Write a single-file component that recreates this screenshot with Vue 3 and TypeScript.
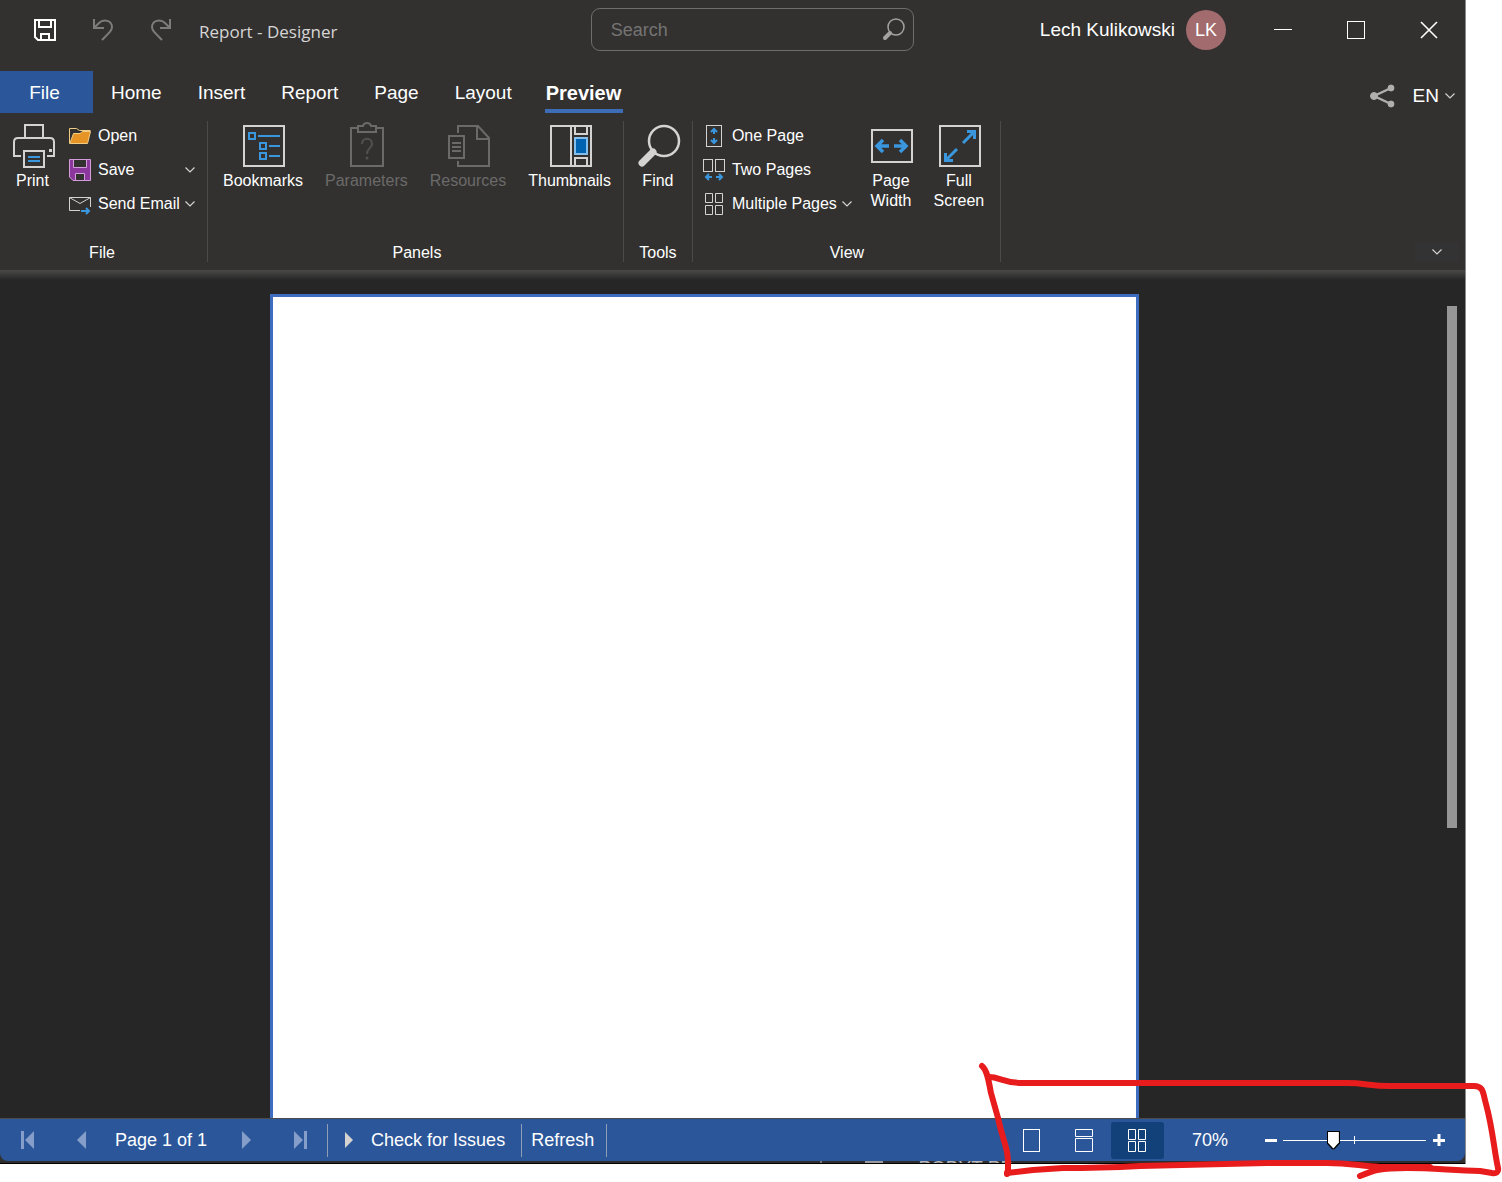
<script setup lang="ts">
import { ref } from 'vue'

const tabs: string[] = ['Home', 'Insert', 'Report', 'Page', 'Layout', 'Preview']
const activeTab = ref('Preview')
const query = ref('')
const sliderPosition = ref(34)
const zoomLabel = ref('70%')
const viewMode = ref('multiple')
</script>

<template>
  <div class="screen">
    <div class="window">
      <header class="titlebar">
        <div class="quick">
          <button class="quick-btn" aria-label="Save">
            <svg width="22" height="22" fill="none" stroke="#fff" stroke-width="2">
              <path d="M1 1H21V21H4L1 18Z" />
              <path d="M5 1V8H17V1M7 21V15H15V21" />
            </svg>
          </button>
          <button class="quick-btn" aria-label="Undo">
            <svg width="22" height="22" fill="none" stroke="#7d7c7b" stroke-width="2">
              <path d="M2 0V9H12M2 9L7 4C12 -1 20 2 20 8C20 11 18 13 10 21" />
            </svg>
          </button>
          <button class="quick-btn" aria-label="Redo">
            <svg width="22" height="22" fill="none" stroke="#7d7c7b" stroke-width="2">
              <path d="M20 0V9H10M20 9L15 4C10 -1 2 2 2 8C2 11 4 13 12 21" />
            </svg>
          </button>
          <h1 class="title">Report - Designer</h1>
        </div>
        <label class="search">
          <input v-model="query" type="text" placeholder="Search" aria-label="Search" />
          <svg width="23" height="23" fill="none" stroke="#a3a2a1">
            <circle cx="14" cy="9" r="8" stroke-width="1.5" />
            <path d="M8 15L3 20" stroke-width="4" stroke-linecap="round" />
          </svg>
        </label>
        <div class="account">
          <span>Lech Kulikowski</span>
          <span class="avatar">LK</span>
        </div>
        <div class="controls">
          <button aria-label="Minimize">
            <svg width="18" height="18" stroke="#fff"><path d="M0 8.5H18" /></svg>
          </button>
          <button aria-label="Maximize">
            <svg width="18" height="18" fill="none" stroke="#fff"><rect x=".5" y=".5" width="17" height="17" /></svg>
          </button>
          <button aria-label="Close">
            <svg width="18" height="18" stroke="#fff" stroke-width="1.6"><path d="M1 1L17 17M17 1L1 17" /></svg>
          </button>
        </div>
      </header>

      <nav class="tabs">
        <button class="file-tab">File</button>
        <button
          v-for="tab in tabs"
          :key="tab"
          class="tab"
          :class="{ active: tab === activeTab }"
          @click="activeTab = tab"
        >{{ tab }}</button>
        <div class="tabs-right">
          <button class="share" aria-label="Share">
            <svg width="25" height="24" fill="#b0afae" stroke="#b0afae">
              <path d="M21 4L4 12L21 20" fill="none" stroke-width="2.4" />
              <circle cx="4" cy="12" r="3.5" /><circle cx="21" cy="4" r="3" /><circle cx="21" cy="20" r="3" />
            </svg>
          </button>
          <button class="lang">
            EN
            <svg class="chevron" width="10" height="6"><path d="M.5 .5L5 5L9.5 .5" /></svg>
          </button>
        </div>
      </nav>

      <section class="ribbon">
        <div class="group group-file">
          <div class="items">
            <button class="big print">
              <svg width="42" height="42" fill="none" stroke="#d4d3d2" stroke-width="2">
                <path d="M12 12V0H30V12" />
                <path d="M8 31H1V17Q1 13 5 13H37Q41 13 41 17V31H34" />
                <rect x="11" y="26" width="20" height="16" />
                <rect x="36" y="24" width="3" height="3" fill="#d4d3d2" stroke="none" />
                <path d="M15 32H27M15 36H27" stroke="#3a96dd" />
              </svg>
              Print
            </button>
            <div class="stack">
              <button class="small">
                <svg width="22" height="22" stroke="#f0cc84">
                  <path d="M.5 18.5V3.5H7.5L10.5 5.5H21.5" fill="none" />
                  <path d="M4.5 8.5H11L13.500 6.500H21.5L18.500 18.500H.8Z" fill="#e59425" />
                </svg>
                Open
              </button>
              <button class="small">
                <svg width="22" height="22" stroke="#d59ddd">
                  <path d="M.5 .5H21.5V21.5H4L.5 18Z" fill="#8b389c" />
                  <path d="M4.500 .5V8.500H17.500V.5ZM6.500 21.500V14.500H15.500V21.500Z" fill="#323130" />
                </svg>
                Save
                <svg class="chevron" width="10" height="6"><path d="M.5 .5L5 5L9.5 .5" /></svg>
              </button>
              <button class="small">
                <svg width="22" height="22" fill="none" stroke="#d4d3d2">
                  <path d="M11 17.5H.5V4.5H21.5V14" />
                  <path d="M.5 4.5L11 10.5L21.5 4.5" />
                  <path d="M12 18H20M17 15L20 18L17 21" stroke="#3a96dd" stroke-width="2" />
                </svg>
                Send Email
                <svg class="chevron" width="10" height="6"><path d="M.5 .5L5 5L9.5 .5" /></svg>
              </button>
            </div>
          </div>
          <div class="caption">File</div>
        </div>

        <div class="group group-panels">
          <div class="items">
            <button class="big">
              <svg width="42" height="42" fill="none" stroke="#d4d3d2" stroke-width="2">
                <rect x="1" y="1" width="40" height="40" />
                <g stroke="#3a96dd">
                  <rect x="6" y="8" width="6" height="6" />
                  <rect x="17" y="18" width="6" height="6" />
                  <rect x="17" y="28" width="6" height="6" />
                  <path d="M15 11H37M26 21H37M26 31H37" />
                </g>
              </svg>
              Bookmarks
            </button>
            <button class="big" disabled>
              <svg width="42" height="42" fill="none" stroke="#6b6a69" stroke-width="2">
                <rect x="5" y="3" width="32" height="38" />
                <path d="M12 1H17C18 -3 24 -3 25 1H30V7H12Z" fill="#323130" />
                <path d="M16 19C16 12 26 12 26 19C26 23 21 23 21 29" stroke="#525150" />
                <circle cx="21" cy="33" r="1.500" fill="#525150" stroke="none" />
              </svg>
              Parameters
            </button>
            <button class="big" disabled>
              <svg width="42" height="42" fill="none" stroke="#6b6a69" stroke-width="2">
                <path d="M10 8V1H30L41 13V41H10V36" />
                <path d="M29 1V14H41" />
                <rect x="1" y="11" width="15" height="22" />
                <path d="M4 18H13M4 22H13M4 26H13" />
              </svg>
              Resources
            </button>
            <button class="big">
              <svg width="42" height="42" fill="none" stroke="#d4d3d2" stroke-width="2">
                <rect x="1" y="1" width="40" height="40" />
                <path d="M21 1V41M25 1V9H37V1M25 41V33H37V41" />
                <rect x="25" y="13" width="12" height="16" fill="#0063b1" stroke="#83beec" />
              </svg>
              Thumbnails
            </button>
          </div>
          <div class="caption">Panels</div>
        </div>

        <div class="group group-tools">
          <div class="items">
            <button class="big find">
              <svg width="42" height="42" fill="none" stroke="#d4d3d2">
                <circle cx="26" cy="16" r="15" stroke-width="2.500" />
                <path d="M15 27L4 38" stroke-width="7" stroke-linecap="round" />
              </svg>
              Find
            </button>
          </div>
          <div class="caption">Tools</div>
        </div>

        <div class="group group-view">
          <div class="items">
            <div class="stack">
              <button class="small">
                <svg width="22" height="22" fill="none" stroke="#d4d3d2">
                  <rect x="3.500" y=".5" width="15" height="21" />
                  <path d="M11 4V9M8 7L11 4L14 7M11 18V13M8 15L11 18L14 15" stroke="#3a96dd" stroke-width="2" />
                </svg>
                One Page
              </button>
              <button class="small">
                <svg width="22" height="22" fill="none" stroke="#d4d3d2">
                  <rect x=".5" y=".5" width="9" height="12" />
                  <rect x="12.500" y=".5" width="9" height="12" />
                  <path d="M3 18H9M6 15L3 18L6 21M13 18H19M16 15L19 18L16 21" stroke="#3a96dd" stroke-width="2" />
                </svg>
                Two Pages
              </button>
              <button class="small">
                <svg width="22" height="22" fill="none" stroke="#d4d3d2">
                  <path d="M2.500 .5H9.500V9.500H2.500ZM12.500 .5H19.500V9.500H12.500ZM2.500 12.500H9.500V21.500H2.500ZM12.500 12.500H19.500V21.500H12.500Z" />
                </svg>
                Multiple Pages
                <svg class="chevron" width="10" height="6"><path d="M.5 .5L5 5L9.5 .5" /></svg>
              </button>
            </div>
            <button class="big page-width">
              <svg width="42" height="42" fill="none" stroke="#d4d3d2" stroke-width="2">
                <rect x="1" y="5" width="40" height="32" />
                <path d="M6 21H18M12 15L6 21L12 27M23 21H35M29 15L35 21L29 27" stroke="#3a96dd" stroke-width="3.500" />
              </svg>
              Page<br />Width
            </button>
            <button class="big full">
              <svg width="42" height="42" fill="none" stroke="#d4d3d2" stroke-width="2">
                <rect x="1" y="1" width="40" height="40" />
                <path d="M28 6.500H35.500V14M35 7L24 18M6.500 28V35.500H14M7 35L18 24" stroke="#3a96dd" stroke-width="3" />
              </svg>
              Full<br />Screen
            </button>
          </div>
          <div class="caption">View</div>
        </div>

        <button class="collapse" aria-label="Collapse ribbon">
          <svg class="chevron" width="10" height="6"><path d="M.5 .5L5 5L9.5 .5" /></svg>
        </button>
      </section>

      <main class="workspace">
        <div class="stage"><div class="paper"></div></div>
        <div class="scrollbar"><div class="scroll-thumb"></div></div>
      </main>

      <footer class="status">
        <button class="nav-btn" aria-label="First page">
          <svg width="13" height="18" fill="#859dc9"><path d="M0 0H3V18H0ZM13 0V18L4 9Z" /></svg>
        </button>
        <button class="nav-btn" aria-label="Previous page">
          <svg width="9" height="18" fill="#859dc9"><path d="M9 0V18L0 9Z" /></svg>
        </button>
        <span class="page-no">Page 1 of 1</span>
        <button class="nav-btn" aria-label="Next page">
          <svg width="9" height="18" fill="#859dc9"><path d="M0 0V18L9 9Z" /></svg>
        </button>
        <button class="nav-btn" aria-label="Last page">
          <svg width="13" height="18" fill="#859dc9"><path d="M10 0H13V18H10ZM0 0V18L9 9Z" /></svg>
        </button>
        <button class="check">
          <svg width="9" height="16" fill="#d4d3d2"><path d="M0 0V16L8 8Z" /></svg>
          Check for Issues
        </button>
        <button class="refresh">Refresh</button>

        <div class="views">
          <button :class="{ on: viewMode === 'single' }" aria-label="Single page" @click="viewMode = 'single'">
            <svg width="17" height="23"><rect x=".5" y=".5" width="16" height="22" /></svg>
          </button>
          <button :class="{ on: viewMode === 'continuous' }" aria-label="Continuous" @click="viewMode = 'continuous'">
            <svg width="18" height="23"><path d="M.5 .5H17.500V7.500H.5ZM.5 9.500H17.500V22.500H.5Z" /></svg>
          </button>
          <button :class="{ on: viewMode === 'multiple' }" aria-label="Multiple pages" @click="viewMode = 'multiple'">
            <svg width="18" height="23">
              <path d="M.5 .5H7.500V10.500H.5ZM10.500 .5H17.500V10.500H10.500ZM.5 12.500H7.500V22.500H.5ZM10.500 12.500H17.500V22.500H10.500Z" />
            </svg>
          </button>
        </div>
        <span class="zoom">{{ zoomLabel }}</span>
        <button class="step" aria-label="Zoom out">
          <svg width="12" height="12" stroke="#fff" stroke-width="3"><path d="M0 6.500H12" /></svg>
        </button>
        <div class="track">
          <input v-model.number="sliderPosition" type="range" min="0" max="100" aria-label="Zoom" />
        </div>
        <button class="step" aria-label="Zoom in">
          <svg width="12" height="12" stroke="#fff" stroke-width="3"><path d="M0 6.500H12M6 0V12" /></svg>
        </button>
      </footer>
      <div class="behind">
        <i class="behind-line"></i><i class="behind-block"></i><span>POBYT PD</span>
      </div>
    </div>

    <svg class="ink" width="530" height="130" viewBox="972 1052 530 130" aria-hidden="true">
      <path d="M982 1066C988 1071 989 1084 991 1093L998 1118C1004 1146 1009 1148 1008 1170L1007 1174" />
      <path d="M989 1077C1000 1077 1003 1083 1023 1083H1347C1365 1083 1370 1086 1390 1086H1474C1484 1086 1483 1094 1486 1104C1493 1130 1494 1150 1498 1168Q1499 1174 1492 1173L1480 1171C1450 1170 1430 1168 1407 1168C1380 1168 1374 1170 1360 1176" />
      <path d="M1007 1173L1033 1170L1063 1168C1100 1168 1120 1167 1140 1166L1267 1163H1327C1350 1163 1360 1166 1380 1167H1430" />
    </svg>
  </div>
</template>

<style>
body {
  background: #fff;
}
</style>

<style scoped>
* {
  box-sizing: border-box;
}

.screen {
  position: relative;
  display: flex;
  flex-direction: column;
  min-height: 100vh;
  padding: 0 36px 18px 0;
  background: #fff;
  color: #fff;
  font-family: 'Liberation Sans', Arial, sans-serif;
  font-size: 16px;
  line-height: 20px;
}

button {
  display: flex;
  align-items: center;
  justify-content: center;
  padding: 0;
  border: 0;
  background: none;
  color: inherit;
  font: inherit;
}

svg {
  display: block;
  flex: none;
  overflow: visible;
}

.chevron {
  fill: none;
  stroke: #d4d3d2;
  stroke-width: 1.2;
}

.window {
  display: flex;
  flex: 1;
  flex-direction: column;
  border-right: 1px solid #8a8a8a;
  background: #323130;
}

.titlebar {
  display: flex;
  align-items: center;
  height: 59px;
  margin-bottom: 12px;
  font-size: 19px;
}

.quick {
  display: flex;
  flex: 1;
  align-items: center;
  padding-left: 16px;
}

.quick-btn {
  width: 58px;
  height: 40px;
}

.title {
  margin: 4px 0 0 9px;
  color: #d6d5d4;
  font-family: 'Open Sans', 'Noto Sans', sans-serif;
  font-size: 17px;
  font-weight: 400;
  line-height: 24px;
}

.search {
  display: flex;
  align-items: center;
  width: 323px;
  height: 43px;
  padding: 0 8px 0 19px;
  border: 1px solid #6e6d6c;
  border-radius: 9px;
}

.search input {
  flex: 1;
  min-width: 0;
  padding: 0;
  border: 0;
  outline: 0;
  background: none;
  color: #fff;
  font: inherit;
  font-size: 18px;
}

.search input::placeholder {
  color: #757473;
  opacity: 1;
}

.account {
  display: flex;
  align-items: center;
  gap: 11px;
  margin: 0 20px 0 126px;
  white-space: nowrap;
}

.avatar {
  width: 40px;
  height: 40px;
  border-radius: 50%;
  background: #a26c6f;
  font-size: 18px;
  line-height: 40px;
  text-align: center;
}

.controls {
  display: flex;
}

.controls button {
  width: 73px;
  height: 40px;
}

.tabs {
  display: flex;
  height: 42px;
  font-size: 19px;
}

.file-tab {
  width: 93px;
  padding: 2px 4px 0 0;
  background: #2b579a;
}

.tab {
  position: relative;
  padding: 2px 18px 0;
}

.tab.active {
  padding: 2px 16px 0;
  font-size: 20px;
  font-weight: 700;
}

.tab.active::after {
  position: absolute;
  right: 14px;
  bottom: 0;
  left: 15px;
  height: 4px;
  background: #3e6db8;
  content: '';
}

.tabs-right {
  display: flex;
  align-items: center;
  gap: 18px;
  margin-left: auto;
  padding: 8px 10px 0 0;
}

.lang {
  gap: 6px;
}

.ribbon {
  display: flex;
  padding: 8px 6px 8px 0;
}

.group {
  display: flex;
  flex-direction: column;
  height: 141px;
  border-right: 1px solid #4b4a49;
}

.group-file {
  padding-right: 3px;
}

.group-panels {
  padding: 0 1px 0 4px;
}

.group-view {
  padding: 0 4px 0 5px;
}

.items {
  display: flex;
  flex: 1;
}

.caption {
  height: 20px;
  line-height: 22px;
  text-align: center;
}

.big {
  flex-direction: column;
  justify-content: flex-start;
  padding: 4px 11px 0;
}

.big svg {
  margin: 0 0 4px 2px;
}

.big:disabled {
  color: #6b6a69;
}

.print {
  width: 64px;
  padding: 4px 10px 0 11px;
}

.find {
  width: 68px;
}

.page-width {
  width: 62px;
}

.full {
  width: 74px;
}

.stack {
  display: flex;
  flex-direction: column;
  width: 140px;
  height: 120px;
}

.group-view .stack {
  width: 162px;
}

.small {
  justify-content: flex-start;
  gap: 5px;
  height: 34px;
  padding: 0 9px 4px 5px;
  line-height: 22px;
  white-space: nowrap;
}

.small svg:first-child {
  margin-right: 2px;
}

.small .chevron {
  margin-left: auto;
}

.collapse {
  align-self: flex-end;
  width: 44px;
  height: 20px;
  margin-left: auto;
  background: #333;
}

.workspace {
  display: flex;
  flex: 1;
  background: linear-gradient(#4a4948, #262626 10px);
}

.stage {
  display: flex;
  flex: 1;
  justify-content: center;
  padding-top: 24px;
}

.paper {
  width: 869px;
  border: 3px solid #3e6dbf;
  border-bottom: 0;
  background: #fff;
}

.scrollbar {
  display: flex;
  flex-direction: column;
  width: 56px;
  padding: 36px 8px 0 0;
}

.scroll-thumb {
  flex: 9;
  align-self: flex-end;
  width: 10px;
  background: #969696;
}

.scrollbar::after {
  flex: 5;
  content: '';
}

.status {
  display: flex;
  align-items: center;
  height: 43px;
  padding-right: 14px;
  border-top: 1px solid #4a4a4a;
  border-radius: 0 0 8px 8px;
  background: #2b579a;
  font-size: 18px;
  white-space: nowrap;
}

.nav-btn {
  width: 54px;
  height: 37px;
}

.page-no {
  padding: 0 12px 0 7px;
}

.check,
.refresh {
  height: 33px;
  border-left: 1px solid #8f9db5;
}

.check {
  gap: 17px;
  padding: 0 16px 0 17px;
}

.refresh {
  padding: 0 12px 0 9px;
  border-right: 1px solid #8f9db5;
}

.views {
  display: flex;
  margin: 0 28px 0 auto;
}

.views button {
  width: 53px;
  height: 37px;
  border-radius: 3px;
}

.views .on {
  background: #124078;
}

.views svg {
  fill: none;
  stroke: #fff;
}

.zoom {
  margin-right: 31px;
}

.step {
  width: 24px;
  height: 37px;
}

.track {
  width: 143px;
  height: 20px;
  margin-right: 1px;
  background:
    linear-gradient(#fff, #fff) center / 100% 1px no-repeat,
    linear-gradient(#fff, #fff) center / 1px 8px no-repeat;
}

.track input {
  display: block;
  width: 100%;
  height: 20px;
  margin: 0;
  appearance: none;
  background: none;
  filter: drop-shadow(1px 0 #000) drop-shadow(-1px 0 #000) drop-shadow(0 1px #000) drop-shadow(0 -1px #000);
}

.track input::-webkit-slider-thumb {
  width: 11px;
  height: 17px;
  appearance: none;
  background: #fff;
  clip-path: polygon(0 0, 100% 0, 100% 65%, 50% 100%, 0 65%);
}

.behind {
  display: flex;
  height: 3px;
  overflow: hidden;
  border-bottom: 1px solid #000;
  background: #2e2d2d;
  color: #b5b5b5;
  font-size: 19px;
  line-height: 14px;
}

.behind-line {
  width: 2px;
  margin-left: 56%;
  background: #777;
}

.behind-block {
  width: 18px;
  margin: 0 35px 0 43px;
  background: #999;
}

.ink {
  position: absolute;
  right: 0;
  bottom: 0;
  fill: none;
  stroke: #e81c1c;
  stroke-width: 6;
  stroke-linecap: round;
  stroke-linejoin: round;
  pointer-events: none;
}
</style>
